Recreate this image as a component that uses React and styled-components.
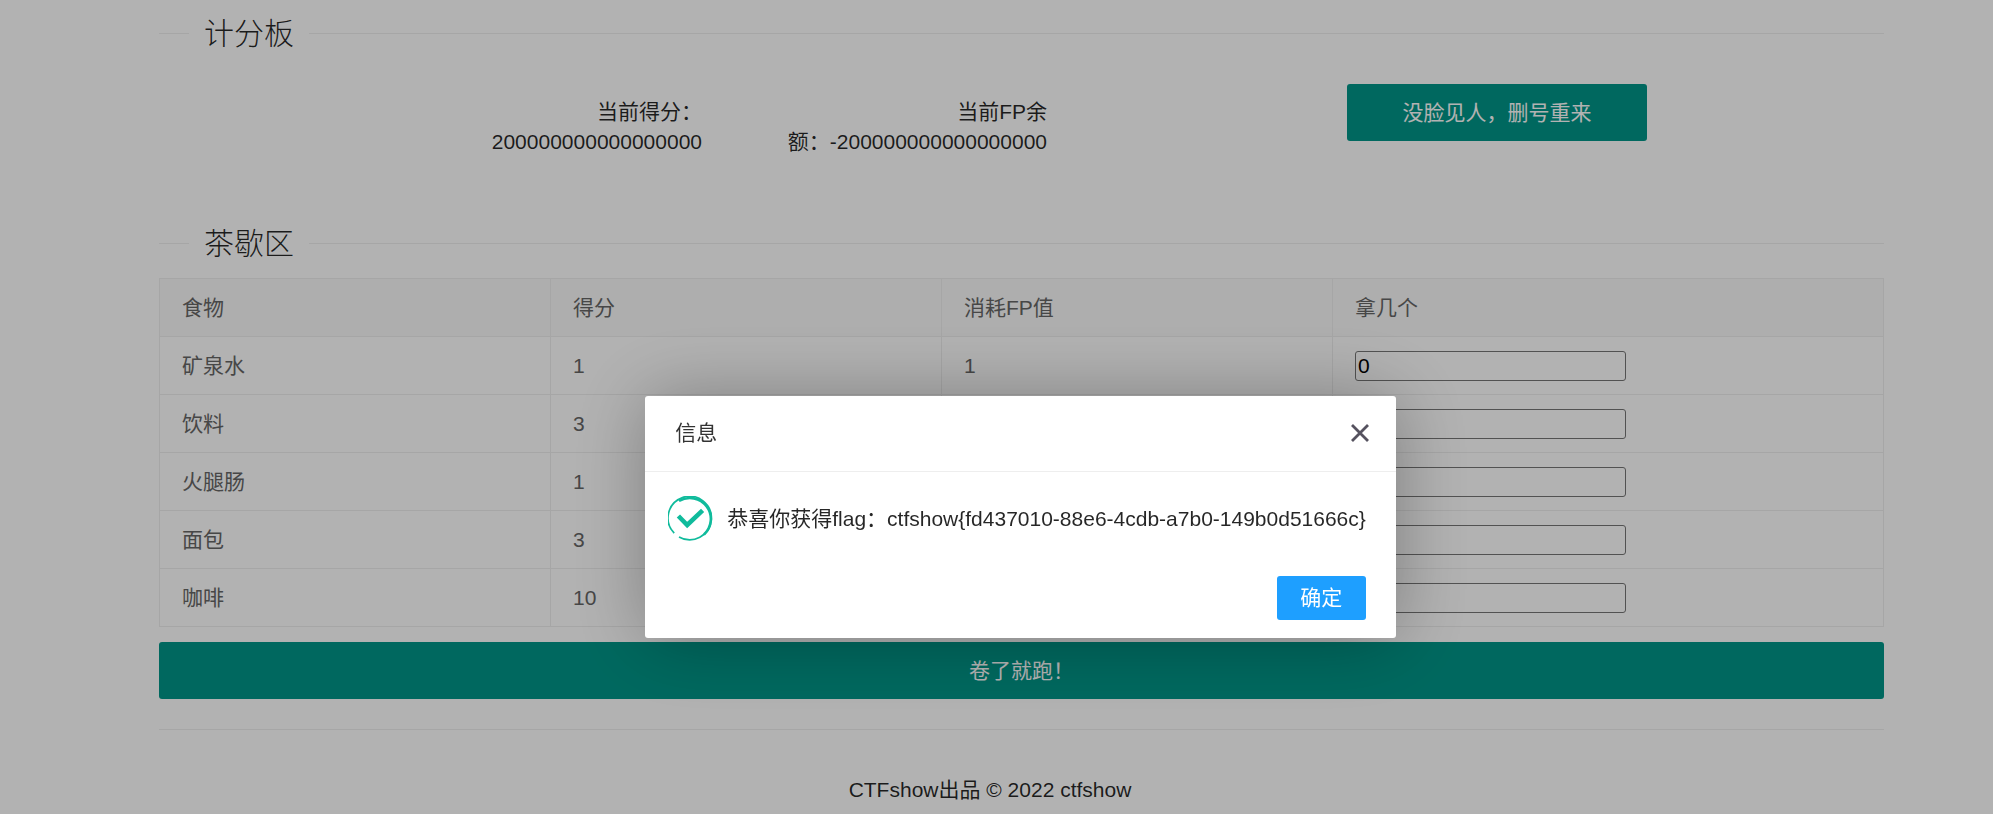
import React, { useState } from "react";
import styled, { createGlobalStyle } from "styled-components";

const GlobalStyle = createGlobalStyle`
  *, *::before, *::after { box-sizing: border-box; }
  body {
    margin: 0;
    background: #fff;
    color: rgba(0, 0, 0, 0.85);
    font: 21px/30px "Liberation Sans", "Noto Sans CJK SC", sans-serif;
  }
  button, input { font: inherit; }
`;

const Page = styled.main`
  min-height: 100vh;
  padding: 11px 109px 0 159px;
`;

const Heading = styled.h2`
  display: flex;
  align-items: center;
  gap: 15px;
  margin: 0;
  font-size: 30px;
  font-weight: 300;
  line-height: 45px;

  &::before, &::after {
    content: "";
    height: 1px;
    background: #eee;
  }
  &::before { width: 30px; }
  &::after { flex: 1; }
`;

const ScoreBoard = styled.div`
  display: grid;
  grid-template-columns: 543fr 345fr 837fr;
  align-items: start;
  height: 165px;
  padding-top: 28px;
`;

const Score = styled.p`
  justify-self: end;
  max-width: 270px;
  margin: 0;
  padding-top: 13px;
  text-align: right;
`;

const MainButton = styled.button`
  width: ${(p) => (p.$fluid ? "100%" : "300px")};
  height: 57px;
  padding: 0 27px;
  border: 0;
  border-radius: 3px;
  background: #009688;
  color: #fff;
  cursor: pointer;
`;

const ResetCell = styled.div`
  padding-left: 300px;
`;

const FoodTable = styled.table`
  width: 100%;
  margin: 12px 0 15px;
  border-collapse: collapse;
  table-layout: fixed;
  color: #666;
`;

const Col = styled.col`
  width: ${(p) => p.$width};
`;

const HeadRow = styled.tr`
  background: #fafafa;
`;

const cellStyle = `
  height: 58px;
  padding: 0 22px;
  border: 1px solid #eee;
  font-weight: 400;
  text-align: left;
`;
const HeadCell = styled.th`${cellStyle}`;
const Cell = styled.td`${cellStyle}`;

const CountInput = styled.input`
  display: block;
  width: 271px;
  height: 30px;
  padding: 0 2px;
  border: 1px solid #767676;
  border-radius: 3px;
  background: #fff;
  color: #000;
`;

const Footer = styled.footer`
  margin-top: 30px;
  padding: 45px 63px 9px 0;
  border-top: 1px solid #eee;
  text-align: center;
`;

const Shade = styled.div`
  position: fixed;
  inset: 0;
  display: flex;
  align-items: flex-start;
  justify-content: center;
  padding: 396px 0 0 48px;
  background: rgba(0, 0, 0, 0.3);
`;

const Dialog = styled.section`
  min-width: 390px;
  border-radius: 3px;
  background: #fff;
  box-shadow: 1px 1px 75px rgba(0, 0, 0, 0.3);
`;

const DialogHeader = styled.header`
  display: flex;
  align-items: center;
  justify-content: space-between;
  height: 76px;
  padding: 0 24px 2px 30px;
  border-bottom: 1px solid #eee;
`;

const DialogTitle = styled.h3`
  margin: 0;
  color: #333;
  font-size: 21px;
  font-weight: 400;
`;

const CloseButton = styled.button`
  display: grid;
  place-items: center;
  width: 24px;
  height: 24px;
  padding: 0;
  border: 0;
  background: none;
  color: #55525f;
  cursor: pointer;
`;

const DialogBody = styled.div`
  display: flex;
  align-items: center;
  gap: 14px;
  padding: 24px 30px 0 23px;
`;

const Message = styled.p`
  margin: 0;
  white-space: nowrap;
`;

const DialogActions = styled.div`
  display: flex;
  justify-content: flex-end;
  padding: 35px 30px 18px;
`;

const ConfirmButton = styled.button`
  width: 89px;
  height: 44px;
  padding: 0;
  border: 0;
  border-radius: 3px;
  background: #1e9fff;
  color: #fff;
  cursor: pointer;
`;

const SuccessIcon = () => (
  <svg width="45" height="45" viewBox="0 0 45 45" fill="none" stroke="#10bb9c" aria-hidden="true">
    <path d="M6.2 37.2A21.7 21.7 0 1 1 11 40.9" strokeWidth="1.7" />
    <path d="M11 5A21 21 0 0 1 36 38.5" strokeWidth="2.6" />
    <path d="M10.4 20L19.2 29L34.6 14.4" strokeWidth="4.6" />
  </svg>
);

const CloseIcon = () => (
  <svg width="18" height="18" viewBox="0 0 18 18" stroke="currentColor" strokeWidth="2.8" aria-hidden="true">
    <path d="M1 1L17 17M17 1L1 17" />
  </svg>
);

const columns = ["食物", "得分", "消耗FP值", "拿几个"];

const foods = [
  { name: "矿泉水", score: 1, cost: 1 },
  { name: "饮料", score: 3, cost: 2 },
  { name: "火腿肠", score: 1, cost: 1 },
  { name: "面包", score: 3, cost: 2 },
  { name: "咖啡", score: 10, cost: 5 },
];

export default function App() {
  const [open, setOpen] = useState(true);
  const close = () => setOpen(false);

  return (
    <>
      <GlobalStyle />
      <Page>
        <Heading>计分板</Heading>
        <ScoreBoard>
          <Score>当前得分：200000000000000000</Score>
          <Score>当前FP余额：-200000000000000000</Score>
          <ResetCell>
            <MainButton type="button">没脸见人，删号重来</MainButton>
          </ResetCell>
        </ScoreBoard>

        <Heading>茶歇区</Heading>
        <FoodTable>
          <colgroup>
            <Col $width="22.68%" />
            <Col $width="22.68%" />
            <Col $width="22.68%" />
            <Col />
          </colgroup>
          <thead>
            <HeadRow>
              {columns.map((title) => (
                <HeadCell key={title} scope="col">{title}</HeadCell>
              ))}
            </HeadRow>
          </thead>
          <tbody>
            {foods.map((food) => (
              <tr key={food.name}>
                <Cell>{food.name}</Cell>
                <Cell>{food.score}</Cell>
                <Cell>{food.cost}</Cell>
                <Cell>
                  <CountInput type="text" defaultValue="0" aria-label={food.name} />
                </Cell>
              </tr>
            ))}
          </tbody>
        </FoodTable>
        <MainButton type="submit" $fluid>卷了就跑！</MainButton>

        <Footer>CTFshow出品 © 2022 ctfshow</Footer>
      </Page>

      {open && (
        <Shade>
          <Dialog role="dialog" aria-modal="true" aria-labelledby="dialog-title">
            <DialogHeader>
              <DialogTitle id="dialog-title">信息</DialogTitle>
              <CloseButton type="button" aria-label="关闭" onClick={close}>
                <CloseIcon />
              </CloseButton>
            </DialogHeader>
            <DialogBody>
              <SuccessIcon />
              <Message>恭喜你获得flag：ctfshow{"{fd437010-88e6-4cdb-a7b0-149b0d51666c}"}</Message>
            </DialogBody>
            <DialogActions>
              <ConfirmButton type="button" onClick={close}>确定</ConfirmButton>
            </DialogActions>
          </Dialog>
        </Shade>
      )}
    </>
  );
}
